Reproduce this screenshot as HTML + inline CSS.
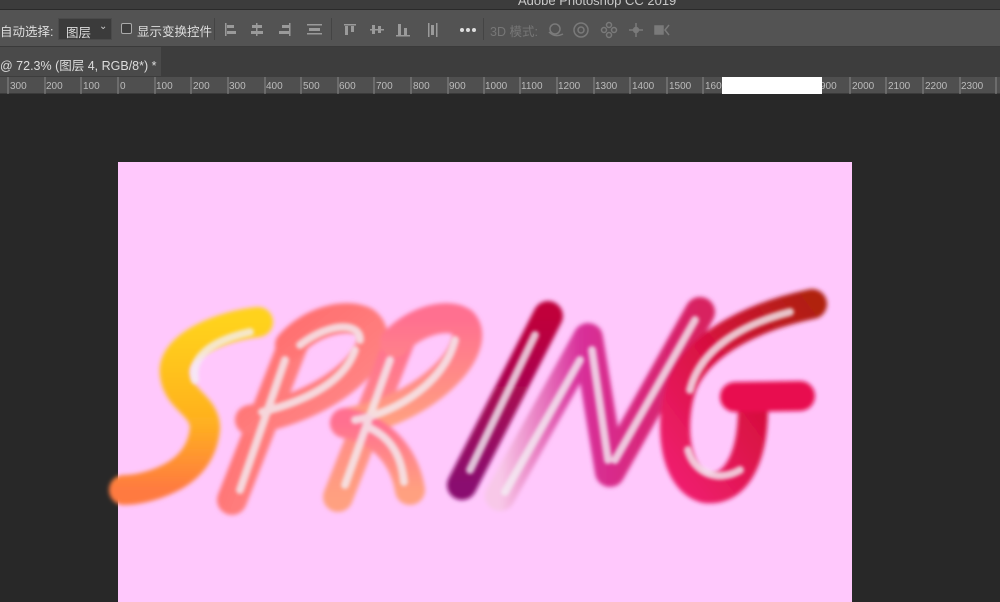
<!DOCTYPE html>
<html><head><meta charset="utf-8"><style>
*{margin:0;padding:0;box-sizing:border-box}
body{width:1000px;height:602px;overflow:hidden;background:#282828;font-family:"Liberation Sans","Noto Sans CJK SC",sans-serif;position:relative;color:#ccc}
.abs{position:absolute}
#title{left:0;top:0;width:1000px;height:10px;background:#3c3c3c;border-bottom:1px solid #2a2a2a;overflow:hidden}
#title span{position:absolute;left:518px;top:-7px;font-size:13px;color:#c8c8c8}
#tool{left:0;top:10px;width:1000px;height:37px;background:#535353;border-bottom:1px solid #3a3a3a;font-size:12.5px}
#tabs{left:0;top:47px;width:1000px;height:30px;background:#3d3d3d}
#tab{left:0;top:47px;width:161px;height:29px;background:#4a4a4a;font-size:12.5px;color:#ddd;padding:8px 0 0 0;white-space:nowrap}
#ruler{left:0;top:77px;width:1000px;height:17px;background:#4f4f4f;border-bottom:1px solid #3a3a3a;font-size:10px;color:#bbb}
.sep{position:absolute;top:8px;width:1px;height:22px;background:#444}
</style></head><body>
<div id="title" class="abs"><span>Adobe Photoshop CC 2019</span></div>
<div id="tool" class="abs">
 <span class="abs" style="left:0;top:11px;color:#ddd">自动选择:</span>
 <div class="abs" style="left:58px;top:8px;width:54px;height:22px;background:#3b3b3b;border:1px solid #4a4a4a"><span class="abs" style="left:7px;top:3px;color:#ddd">图层</span><span class="abs" style="left:40px;top:2px;color:#ccc;font-size:10px">⌄</span></div>
 <div class="abs" style="left:121px;top:13px;width:11px;height:11px;border:1px solid #aaa;border-radius:2px;background:#3e3e3e"></div>
 <span class="abs" style="left:137px;top:11px;color:#ddd">显示变换控件</span>
 <div class="sep" style="left:214px"></div>
 <svg class="abs" style="left:220px;top:10px" width="260" height="20" fill="#9a9a9a">
  <rect x="5" y="3" width="1.5" height="13"/><rect x="7" y="5" width="7" height="3"/><rect x="7" y="11" width="9" height="3"/>
  <rect x="36" y="3" width="1.5" height="13"/><rect x="32" y="5" width="10" height="3"/><rect x="31" y="11" width="12" height="3"/>
  <rect x="69" y="3" width="1.5" height="13"/><rect x="62" y="5" width="7" height="3"/><rect x="59" y="11" width="10" height="3"/>
  <rect x="87" y="4" width="15" height="1.5"/><rect x="89" y="8" width="11" height="3"/><rect x="87" y="13" width="15" height="1.5"/>
  <rect x="124" y="4" width="12" height="1.5"/><rect x="125" y="6" width="3" height="9"/><rect x="131" y="6" width="3" height="6"/>
  <rect x="150" y="9" width="14" height="1.5"/><rect x="152" y="5" width="3" height="9"/><rect x="158" y="6" width="3" height="7"/>
  <rect x="176" y="15" width="14" height="1.5"/><rect x="178" y="4" width="3" height="11"/><rect x="184" y="8" width="3" height="7"/>
  <rect x="208" y="3" width="1.5" height="14"/><rect x="216" y="3" width="1.5" height="14"/><rect x="211" y="5" width="3" height="10"/>
  <circle cx="242" cy="10" r="2" fill="#ddd"/><circle cx="248" cy="10" r="2" fill="#ddd"/><circle cx="254" cy="10" r="2" fill="#ddd"/>
 </svg>
 <div class="sep" style="left:331px"></div>
 <div class="sep" style="left:483px"></div>
 <span class="abs" style="left:490px;top:11px;color:#777">3D 模式:</span>
 <svg class="abs" style="left:545px;top:10px" width="130" height="20" fill="none" stroke="#7a7a7a" stroke-width="1.5">
  <circle cx="10" cy="9" r="5"/><path d="M4 12 q6 6 14 2"/>
  <circle cx="36" cy="10" r="7"/><circle cx="36" cy="10" r="3"/>
  <circle cx="64" cy="5" r="2.5"/><circle cx="64" cy="15" r="2.5"/><circle cx="59" cy="10" r="2.5"/><circle cx="69" cy="10" r="2.5"/>
  <path d="M91 3v14M84 10h14"/><circle cx="91" cy="10" r="2.5" fill="#7a7a7a"/>
  <rect x="110" y="6" width="8" height="8" fill="#7a7a7a"/><path d="M124 5l-4 5 4 5"/>
 </svg>
</div>
<div id="tabs" class="abs"></div>
<div id="tab" class="abs">@ 72.3% (图层 4, RGB/8*) *</div>
<div id="ruler" class="abs">
 <svg class="abs" style="left:0;top:0" width="1000" height="17">
  <g fill="#bbb" font-family="Liberation Sans, sans-serif" font-size="10">
   <text x="10" y="12">300</text><text x="46" y="12">200</text><text x="83" y="12">100</text><text x="120" y="12">0</text>
   <text x="156" y="12">100</text><text x="193" y="12">200</text><text x="229" y="12">300</text><text x="266" y="12">400</text>
   <text x="303" y="12">500</text><text x="339" y="12">600</text><text x="376" y="12">700</text><text x="413" y="12">800</text>
   <text x="449" y="12">900</text><text x="485" y="12">1000</text><text x="521" y="12">1100</text><text x="558" y="12">1200</text>
   <text x="595" y="12">1300</text><text x="632" y="12">1400</text><text x="669" y="12">1500</text><text x="705" y="12">160</text>
   <text x="820" y="12">900</text><text x="852" y="12">2000</text><text x="888" y="12">2100</text><text x="925" y="12">2200</text><text x="961" y="12">2300</text>
  </g>
  <g stroke="#888">
   <path d="M8 0v17M45 0v17M81 0v17M118 0v17M155 0v17M191 0v17M228 0v17M265 0v17M301 0v17M338 0v17M374 0v17M411 0v17M448 0v17M484 0v17M520 0v17M557 0v17M594 0v17M630 0v17M667 0v17M703 0v17M850 0v17M886 0v17M923 0v17M960 0v17M996 0v17"/>
  </g>
  <rect x="722" y="0" width="100" height="17" fill="#fff"/>
 </svg>
</div>
<div class="abs" style="left:118px;top:162px;width:734px;height:440px;background:#ffc8fc"></div>
<svg class="abs" style="left:0;top:0" width="1000" height="602" fill="none" stroke-linecap="round" stroke-linejoin="round">
 <defs>
  <filter id="b" x="-20%" y="-20%" width="140%" height="140%"><feGaussianBlur stdDeviation="2.2"/></filter>
  <filter id="b2"><feGaussianBlur stdDeviation="1.8"/></filter>
  <linearGradient id="gS" x1="0" y1="0" x2="0" y2="1"><stop offset="0" stop-color="#ffd21a"/><stop offset=".6" stop-color="#ffb020"/><stop offset="1" stop-color="#ff7a40"/></linearGradient>
  <linearGradient id="gP" x1="0" y1="0" x2="1" y2="1"><stop offset="0" stop-color="#ff6a6a"/><stop offset="1" stop-color="#ff8a8a"/></linearGradient>
  <linearGradient id="gR" x1="0" y1="0" x2="0" y2="1"><stop offset="0" stop-color="#ff7090"/><stop offset="1" stop-color="#ffa080"/></linearGradient>
  <linearGradient id="gI" x1="0" y1="0" x2="0" y2="1"><stop offset="0" stop-color="#c0003a"/><stop offset="1" stop-color="#8a1070"/></linearGradient>
  <linearGradient id="gN" x1="0" y1="0" x2="1" y2="0"><stop offset="0" stop-color="#f8c8e8"/><stop offset=".4" stop-color="#d8309a"/><stop offset="1" stop-color="#d82060"/></linearGradient>
  <linearGradient id="gG" x1="1" y1="0" x2="0" y2="1"><stop offset="0" stop-color="#b02010"/><stop offset=".5" stop-color="#d81040"/><stop offset="1" stop-color="#f02070"/></linearGradient>
 </defs>
 <g filter="url(#b)" stroke-width="30">
  <path stroke="url(#gS)" d="M258 322 C225 325 170 345 175 375 C178 400 205 405 205 428 C203 452 190 468 170 478 C150 488 132 490 124 490"/>
  <path stroke="url(#gP)" d="M294 342 L232 500"/>
  <path stroke="url(#gP)" d="M290 345 C310 322 345 312 365 322 C392 342 345 402 250 420"/>
  <path stroke="url(#gR)" d="M400 340 L338 497"/>
  <path stroke="url(#gR)" d="M395 342 C415 322 445 312 462 322 C485 345 430 410 345 423"/>
  <path stroke="url(#gR)" d="M345 423 C385 430 405 460 410 490"/>
  <path stroke="url(#gI)" d="M548 316 L462 485"/>
  <path stroke="url(#gN)" d="M500 496 L588 338 L610 472 L700 312"/>
  <path stroke="url(#gG)" d="M812 304 C760 315 700 340 682 385 C668 425 675 480 705 488 C735 492 752 460 753 412"/>
  <path stroke="#e81050" d="M735 397 L800 396"/>
 </g>
 <g filter="url(#b2)" stroke="#f4eef4" stroke-width="8" opacity=".8">
  <path d="M250 332 C215 340 190 355 195 380"/>
  <path d="M285 360 L240 490"/>
  <path d="M300 345 C330 322 360 322 360 340"/>
  <path d="M262 412 C310 400 345 380 355 350"/>
  <path d="M390 360 L345 485"/>
  <path d="M355 420 C400 412 445 380 455 340"/>
  <path d="M370 428 C395 440 402 462 404 482"/>
  <path d="M535 335 L470 470"/>
  <path d="M505 492 L580 360"/>
  <path d="M592 350 L608 460"/>
  <path d="M615 460 L695 320"/>
  <path d="M690 390 C700 350 740 325 790 312"/>
  <path d="M688 450 C695 475 720 482 740 470"/>
 </g>
</svg>
</body></html>
